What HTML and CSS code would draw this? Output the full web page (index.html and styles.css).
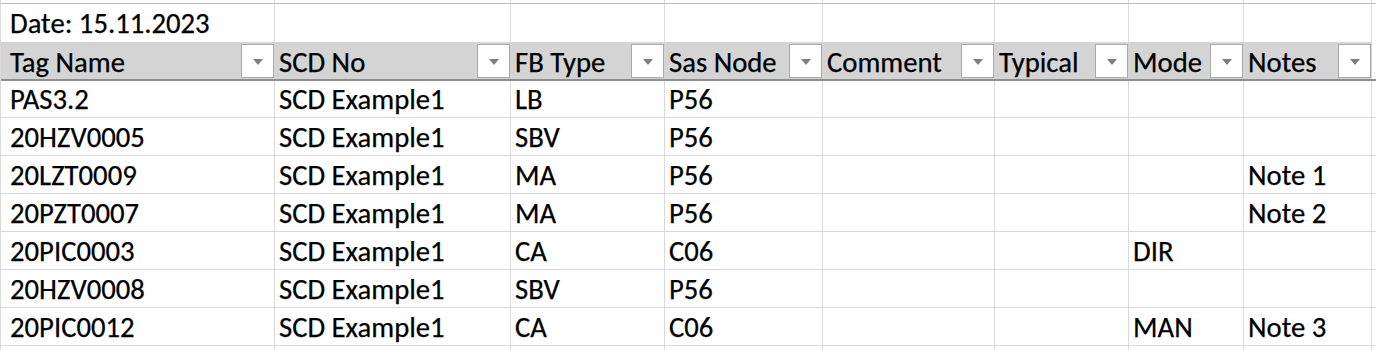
FILE: index.html
```html
<!DOCTYPE html>
<html lang="en">
<head>
<meta charset="utf-8">
<title>Sheet</title>
<link rel="stylesheet" href="styles.css">
</head>
<body>
<div class="sheet">
  <div class="c top"></div><div class="c top"></div><div class="c top"></div><div class="c top"></div><div class="c top"></div><div class="c top"></div><div class="c top"></div><div class="c top"></div><div class="c top last"></div>

  <div class="c date first">Date: 15.11.2023</div><div class="c date"></div><div class="c date"></div><div class="c date"></div><div class="c date"></div><div class="c date"></div><div class="c date"></div><div class="c date"></div><div class="c date last"></div>

  <div class="h first"><span>Tag Name</span><span class="flt"><i></i></span></div>
  <div class="h"><span>SCD No</span><span class="flt"><i></i></span></div>
  <div class="h"><span>FB Type</span><span class="flt"><i></i></span></div>
  <div class="h"><span>Sas Node</span><span class="flt"><i></i></span></div>
  <div class="h"><span>Comment</span><span class="flt"><i></i></span></div>
  <div class="h"><span>Typical</span><span class="flt"><i></i></span></div>
  <div class="h"><span>Mode</span><span class="flt"><i></i></span></div>
  <div class="h"><span>Notes</span><span class="flt"><i></i></span></div>
  <div class="h blank"></div>

  <div class="c first">PAS3.2</div><div class="c">SCD Example1</div><div class="c">LB</div><div class="c">P56</div><div class="c"></div><div class="c"></div><div class="c"></div><div class="c"></div><div class="c last"></div>
  <div class="c first">20HZV0005</div><div class="c">SCD Example1</div><div class="c">SBV</div><div class="c">P56</div><div class="c"></div><div class="c"></div><div class="c"></div><div class="c"></div><div class="c last"></div>
  <div class="c first">20LZT0009</div><div class="c">SCD Example1</div><div class="c">MA</div><div class="c">P56</div><div class="c"></div><div class="c"></div><div class="c"></div><div class="c">Note 1</div><div class="c last"></div>
  <div class="c first">20PZT0007</div><div class="c">SCD Example1</div><div class="c">MA</div><div class="c">P56</div><div class="c"></div><div class="c"></div><div class="c"></div><div class="c">Note 2</div><div class="c last"></div>
  <div class="c first">20PIC0003</div><div class="c">SCD Example1</div><div class="c">CA</div><div class="c">C06</div><div class="c"></div><div class="c"></div><div class="c">DIR</div><div class="c"></div><div class="c last"></div>
  <div class="c first">20HZV0008</div><div class="c">SCD Example1</div><div class="c">SBV</div><div class="c">P56</div><div class="c"></div><div class="c"></div><div class="c"></div><div class="c"></div><div class="c last"></div>
  <div class="c first">20PIC0012</div><div class="c">SCD Example1</div><div class="c">CA</div><div class="c">C06</div><div class="c"></div><div class="c"></div><div class="c">MAN</div><div class="c">Note 3</div><div class="c last"></div>
  <div class="c first"></div><div class="c"></div><div class="c"></div><div class="c"></div><div class="c"></div><div class="c"></div><div class="c"></div><div class="c"></div><div class="c last"></div>
</div>
</body>
</html>
```

FILE: styles.css
```css
html, body {
  margin: 0;
  padding: 0;
  background: #ffffff;
  overflow: hidden;
}

.sheet {
  display: grid;
  grid-template-columns: 274px 236px 154px 158px 172px 134px 115px 128px 1fr;
  grid-template-rows: 4px 38px 39px 37px repeat(7, 38px);
  width: 1376px;
  height: 350px;
  overflow: hidden;
  border-left: 1px solid #d9d9d9;
  box-sizing: border-box;
  font-family: Carlito, Lato, "Open Sans", sans-serif;
  font-size: 28.7px;
  line-height: 30px;
  color: #000000;
  -webkit-text-stroke: 0.25px #000000;
}

.c {
  box-sizing: border-box;
  border-right: 1px solid #d9d9d9;
  border-bottom: 1px solid #d9d9d9;
  display: flex;
  align-items: flex-end;
  padding: 0 4px 2px 4px;
  white-space: nowrap;
  overflow: visible;
  min-width: 0;
}

.c.first {
  padding-left: 9px;
}

.c.top {
  border-bottom: 1px solid #bdbdbd;
  padding: 0;
}

.c.date {
  border-bottom: none;
  padding-bottom: 3px;
}

.h {
  box-sizing: border-box;
  background: #d4d4d4;
  border-bottom: 2px solid #8e8e8e;
  display: flex;
  align-items: flex-end;
  justify-content: space-between;
  padding: 0 1px 1px 4px;
  white-space: nowrap;
  min-width: 0;
}

.h.first {
  padding-left: 9px;
}

.h.blank {
  background: #ffffff;
}

.flt {
  box-sizing: border-box;
  width: 33px;
  height: 34px;
  flex: none;
  align-self: flex-end;
  margin-bottom: 0;
  background: #ffffff;
  border: 1px solid #aaaaaa;
  display: flex;
  align-items: center;
  justify-content: center;
  -webkit-text-stroke: 0;
}

.flt i {
  display: block;
  width: 0;
  height: 0;
  border-left: 5.5px solid transparent;
  border-right: 5.5px solid transparent;
  border-top: 6px solid #7f7f7f;
  margin-top: 1px;
}
```
